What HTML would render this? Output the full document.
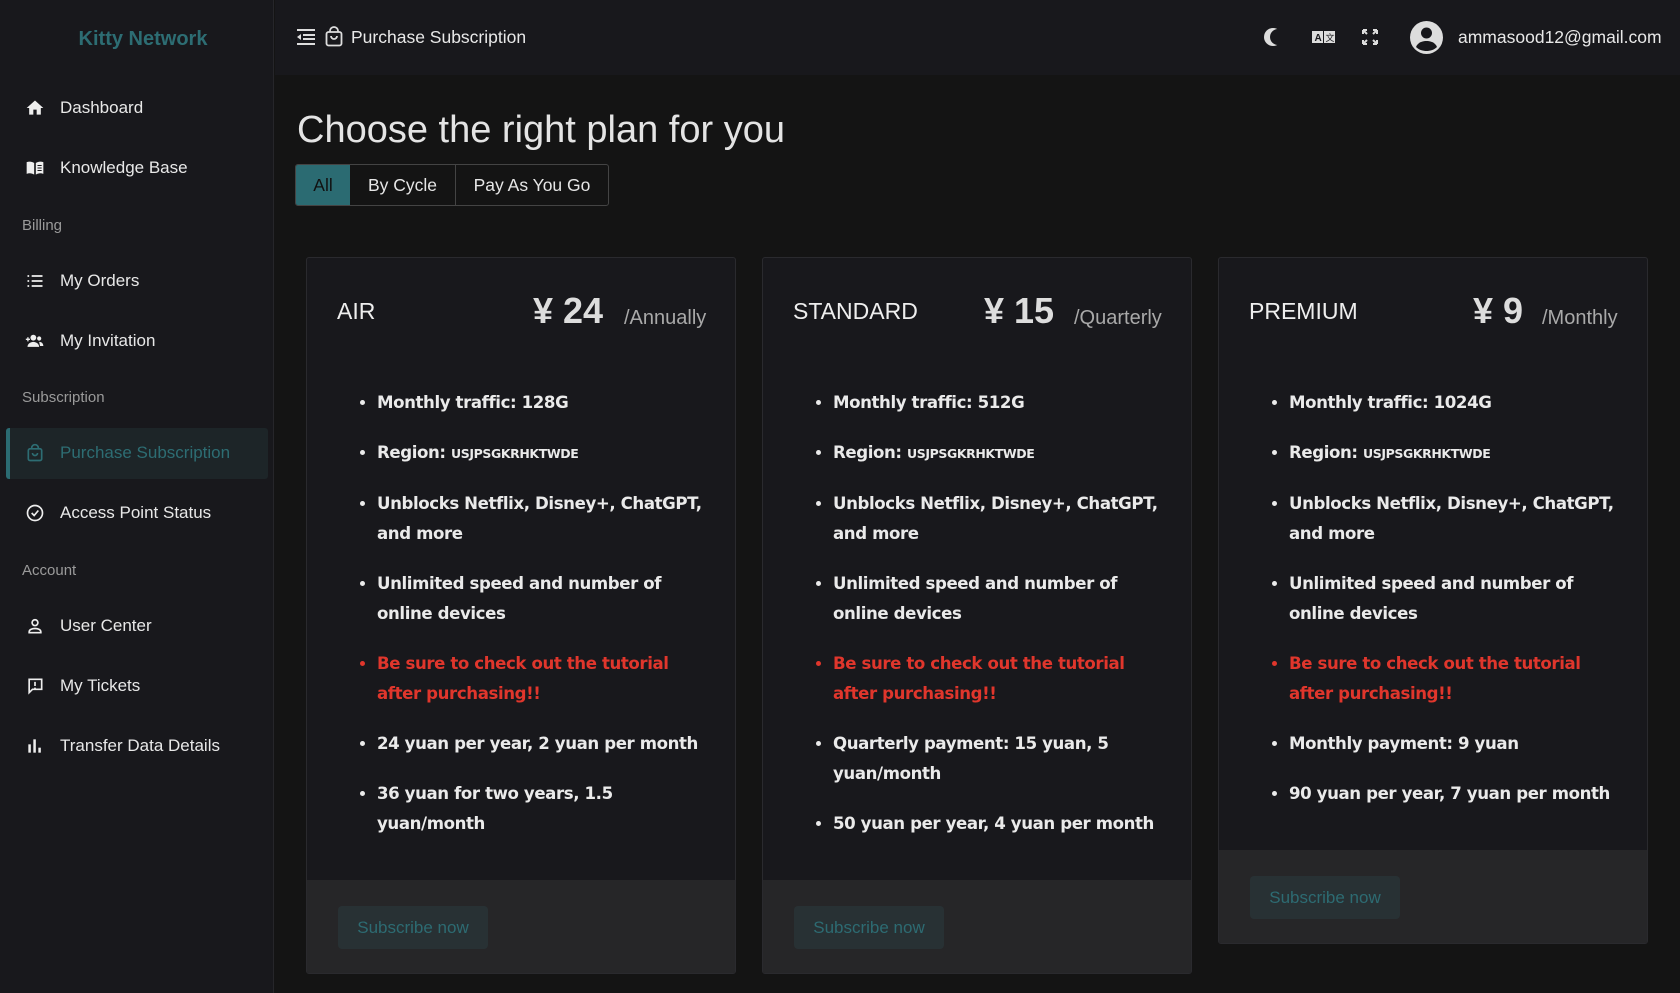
<!DOCTYPE html>
<html><head><meta charset="utf-8"><style>
*{box-sizing:border-box;margin:0;padding:0}
body{width:1680px;height:993px;background:#141414;font-family:"Liberation Sans",sans-serif;color:#e6e6e6;position:relative;overflow:hidden}
.side{position:absolute;left:0;top:0;width:274px;height:993px;background:#18181c;border-right:1px solid #26262a}
.logo{position:absolute;top:28px;left:0;width:286px;text-align:center;color:#2d6d73;font-weight:bold;font-size:20px}
.it{position:absolute;left:0;width:274px;height:30px;font-size:17px;color:#e8e8e8;display:flex;align-items:center}
.it svg{position:absolute;left:25px;width:20px;height:20px}
.it span{position:absolute;left:60px}
.sec{position:absolute;left:22px;font-size:15px;color:#9a9a9a}
.act{position:absolute;left:6px;top:428px;width:262px;height:51px;background:#1d2528;border-left:4px solid #2b6b72;border-radius:3px}
.hdr{position:absolute;left:275px;top:0;right:0;height:75px;background:#18181c}
.card{position:absolute;top:257px;width:430px;background:#18181c;border:1px solid #2a2a2e;border-radius:3px;overflow:hidden}
.ct{position:absolute;left:30px;top:40px;font-size:23px;color:#eee}
.pr{position:absolute;top:32px;font-size:36px;font-weight:bold;color:#ddd}
.per{position:absolute;top:49px;font-size:20px;color:#a9a9a9}
ul{position:absolute;left:70px;top:130px;width:335px;font-family:"DejaVu Sans",sans-serif;font-size:16.6px;font-weight:bold;line-height:30px;color:#eaeaea;letter-spacing:-0.4px}
li{margin-bottom:20px}
li.r{color:#e0362c}
small{font-size:12.5px}
.ft{position:absolute;left:0;right:0;bottom:0;height:93px;background:#262628}
.btn{position:absolute;left:31px;top:26px;width:150px;height:43px;background:#283134;border-radius:4px;color:#2d6b72;font-size:17px;display:flex;align-items:center;justify-content:center}
</style></head><body>
<div class="side">
<div class="logo">Kitty Network</div>
<div class="act"></div>
<div class="it" style="top:93px"><svg viewBox="0 0 24 24"><path d="M10 20v-6h4v6h5v-8h3L12 3 2 12h3v8z" fill="#eee"/></svg><span>Dashboard</span></div>
<div class="it" style="top:153px"><svg viewBox="0 0 24 24"><path d="M2 5c3-1 6-1 9 1v14c-3-2-6-2-9-1zM13 6c3-2 6-2 9-1v14c-3-1-6-1-9 1z" fill="#eee"/><path d="M15 9h5M15 12h5M15 15h5" stroke="#18181c" stroke-width="1.3"/></svg><span>Knowledge Base</span></div>
<div class="sec" style="top:217px">Billing</div>
<div class="it" style="top:266px"><svg viewBox="0 0 24 24"><path d="M3 6h2M8 6h13M3 12h2M8 12h13M3 18h2M8 18h13" stroke="#eee" stroke-width="2"/></svg><span>My Orders</span></div>
<div class="it" style="top:326px"><svg viewBox="0 0 24 24"><circle cx="10" cy="8" r="3.5" fill="#eee"/><circle cx="17" cy="9" r="2.5" fill="#eee"/><path d="M3 19c0-4 4-6 7-6s7 2 7 6zM17 13c3 0 5 2 5 5h-4" fill="#eee"/><path d="M1 10h5M3.5 7.5v5" stroke="#eee" stroke-width="1.6"/></svg><span>My Invitation</span></div>
<div class="sec" style="top:389px">Subscription</div>
<div class="it" style="top:438px;color:#2d6d73"><svg viewBox="0 0 24 24" fill="none" stroke="#2d6d73" stroke-width="2"><rect x="4" y="7" width="16" height="14" rx="2"/><path d="M8 7V6a4 4 0 0 1 8 0v1M9 12a3 3 0 0 0 6 0"/></svg><span>Purchase Subscription</span></div>
<div class="it" style="top:498px"><svg viewBox="0 0 24 24" fill="none" stroke="#eee" stroke-width="2"><circle cx="12" cy="12" r="9"/><path d="M8 12l3 3 5-6"/></svg><span>Access Point Status</span></div>
<div class="sec" style="top:562px">Account</div>
<div class="it" style="top:611px"><svg viewBox="0 0 24 24" fill="none" stroke="#eee" stroke-width="2"><circle cx="12" cy="8" r="3.5"/><path d="M5 20v-1c0-3 4-4 7-4s7 1 7 4v1z"/></svg><span>User Center</span></div>
<div class="it" style="top:671px"><svg viewBox="0 0 24 24" fill="none" stroke="#eee" stroke-width="2"><path d="M4 4h16v12H9l-4 4V4z"/><path d="M12 7v5M12 14v1"/></svg><span>My Tickets</span></div>
<div class="it" style="top:731px"><svg viewBox="0 0 24 24" fill="#eee"><rect x="4" y="10" width="3" height="10"/><rect x="10" y="4" width="3" height="16"/><rect x="16" y="14" width="3" height="6"/></svg><span>Transfer Data Details</span></div>
</div>
<div class="hdr">
<svg style="position:absolute;left:21px;top:27px" width="20" height="20" viewBox="0 0 20 20" fill="#ddd"><rect x="1" y="2" width="18" height="2"/><rect x="7" y="7" width="12" height="2"/><rect x="7" y="11" width="12" height="2"/><rect x="1" y="16" width="18" height="2"/><path d="M5 7v6l-4-3z"/></svg>
<svg style="position:absolute;left:50px;top:26px" width="18" height="21" viewBox="0 0 18 21" fill="none" stroke="#ddd" stroke-width="1.8"><rect x="1.5" y="6" width="15" height="13.5" rx="2"/><path d="M5 6V5a4 4 0 0 1 8 0v1M6 10a3 3 0 0 0 6 0"/></svg>
<div style="position:absolute;left:76px;top:27px;font-size:17.5px;color:#e8e8e8">Purchase Subscription</div>
<svg style="position:absolute;left:988px;top:27px" width="18" height="20" viewBox="0 0 18 20"><circle cx="10" cy="10" r="9" fill="#ddd"/><circle cx="15" cy="10" r="8" fill="#18181c"/></svg>
<svg style="position:absolute;left:1037px;top:30px" width="24" height="14" viewBox="0 0 24 14"><rect x="0" y="1" width="11" height="12" fill="#ddd"/><rect x="12" y="1" width="11" height="12" fill="#ddd"/><text x="2.5" y="11" font-size="10" font-family="Liberation Sans" font-weight="bold" fill="#18181c">A</text><text x="13.5" y="11" font-size="9" font-family="Noto Sans CJK SC" fill="#18181c">文</text></svg>
<svg style="position:absolute;left:1086px;top:28px" width="18" height="18" viewBox="0 0 18 18" stroke="#ddd" stroke-width="2" fill="none"><path d="M2 2l4 4M2 2v4M2 2h4M16 2l-4 4M16 2v4M16 2h-4M2 16l4-4M2 16v-4M2 16h4M16 16l-4-4M16 16v-4M16 16h-4"/></svg>
<svg style="position:absolute;left:1135px;top:21px" width="33" height="33" viewBox="0 0 33 33"><circle cx="16.5" cy="16.5" r="16.5" fill="#ddd"/><circle cx="16.5" cy="12" r="5.5" fill="#18181c"/><path d="M6 26c2-5 7-6 10.5-6s8.5 1 10.5 6c-3 3-7 4-10.5 4S9 29 6 26z" fill="#18181c"/></svg>
<div style="position:absolute;left:1183px;top:27px;font-size:17.5px;color:#e8e8e8">ammasood12@gmail.com</div>
</div>
<div style="position:absolute;left:297px;top:109px;font-size:38px;color:#e4e4e4">Choose the right plan for you</div>
<div style="position:absolute;left:295px;top:164px;height:42px;display:flex;border:1px solid #444;border-radius:3px;font-size:17.5px;overflow:hidden">
<div style="width:54px;background:#2b6b72;color:#111;display:flex;align-items:center;justify-content:center">All</div>
<div style="width:106px;border-right:1px solid #444;display:flex;align-items:center;justify-content:center">By Cycle</div>
<div style="width:152px;display:flex;align-items:center;justify-content:center">Pay As You Go</div>
</div>

<div class="card" style="left:306px;height:717px">
<div class="ct">AIR</div><div class="pr" style="left:226px">¥ 24</div><div class="per" style="left:317px">/Annually</div>
<ul><li>Monthly traffic: 128G</li><li>Region: <small>USJPSGKRHKTWDE</small></li><li>Unblocks Netflix, Disney+, ChatGPT, and more</li><li>Unlimited speed and number of online devices</li><li class="r">Be sure to check out the tutorial after purchasing!!</li><li>24 yuan per year, 2 yuan per month</li><li>36 yuan for two years, 1.5 yuan/month</li></ul>
<div class="ft"><div class="btn">Subscribe now</div></div></div>

<div class="card" style="left:762px;height:717px">
<div class="ct">STANDARD</div><div class="pr" style="left:221px">¥ 15</div><div class="per" style="left:311px">/Quarterly</div>
<ul><li>Monthly traffic: 512G</li><li>Region: <small>USJPSGKRHKTWDE</small></li><li>Unblocks Netflix, Disney+, ChatGPT, and more</li><li>Unlimited speed and number of online devices</li><li class="r">Be sure to check out the tutorial after purchasing!!</li><li>Quarterly payment: 15 yuan, 5 yuan/month</li><li>50 yuan per year, 4 yuan per month</li></ul>
<div class="ft"><div class="btn">Subscribe now</div></div></div>

<div class="card" style="left:1218px;height:687px">
<div class="ct">PREMIUM</div><div class="pr" style="left:254px">¥ 9</div><div class="per" style="left:323px">/Monthly</div>
<ul><li>Monthly traffic: 1024G</li><li>Region: <small>USJPSGKRHKTWDE</small></li><li>Unblocks Netflix, Disney+, ChatGPT, and more</li><li>Unlimited speed and number of online devices</li><li class="r">Be sure to check out the tutorial after purchasing!!</li><li>Monthly payment: 9 yuan</li><li>90 yuan per year, 7 yuan per month</li></ul>
<div class="ft"><div class="btn">Subscribe now</div></div></div>
</body></html>
